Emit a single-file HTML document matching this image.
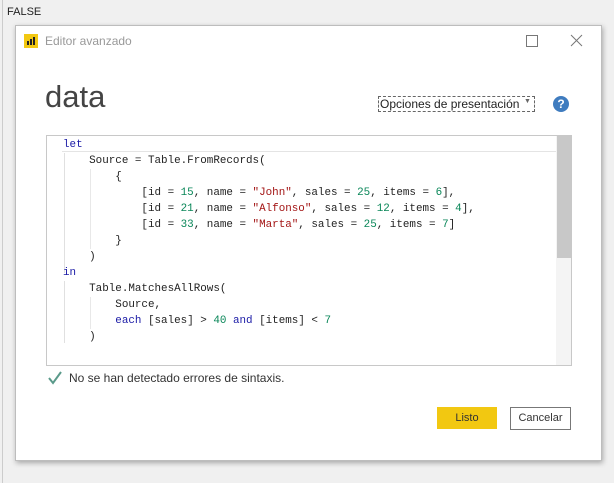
<!DOCTYPE html><html><head><style>
body{margin:0;width:614px;height:483px;background:#f0f0f0;position:relative;overflow:hidden;font-family:"Liberation Sans",sans-serif}
.a{position:absolute}
.dlg{left:15px;top:25px;width:585px;height:434px;background:#fff;border:1px solid #bdbdbd;box-shadow:1px 2px 5px rgba(0,0,0,.3)}
.code{font-family:"Liberation Mono",monospace;font-size:10.9px;color:#222;white-space:pre;line-height:16px}
.k{color:#1a1aa6}.n{color:#098658}.s{color:#a31515}
</style></head><body>
<div class="a" style="left:2px;top:0;width:1px;height:483px;background:#ccc"></div>
<div class="a" style="left:7px;top:6px;font-size:11px;color:#222">FALSE</div>
<div class="a dlg"></div>
<div class="a" style="left:24px;top:34px;width:14px;height:14px;background:#f2c811"></div>
<svg class="a" style="left:24px;top:34px" width="14" height="14"><rect x="3" y="7" width="2" height="4" fill="#222"/><rect x="6" y="5" width="2" height="6" fill="#222"/><rect x="9" y="3" width="2" height="8" fill="#222"/></svg>
<div class="a" style="left:45px;top:34px;font-size:12px;color:#999">Editor avanzado</div>
<div class="a" style="left:526px;top:35px;width:10px;height:10px;border:1px solid #777"></div>
<svg class="a" style="left:570px;top:34px" width="13" height="13"><path d="M1 1L12 12M12 1L1 12" stroke="#777" stroke-width="1"/></svg>
<div class="a" style="left:45px;top:79px;font-size:31px;color:#444;font-weight:300">data</div>
<div class="a" style="left:378px;top:96px;width:157px;height:16px;border:1px dashed #666;font-size:12px;color:#222;line-height:15px;box-sizing:border-box;padding-left:1px;white-space:nowrap">Opciones de presentación</div>
<div class="a" style="left:524px;top:98px;font-size:7px;color:#666">▼</div>
<div class="a" style="left:553px;top:96px;width:16px;height:16px;border-radius:50%;background:#3f7cbf;color:#fff;font-weight:bold;font-size:12px;text-align:center;line-height:16px">?</div>
<div class="a" style="left:46px;top:135px;width:526px;height:231px;border:1px solid #c8c8c8;box-sizing:border-box"></div>
<div class="a" style="left:556px;top:136px;width:15px;height:229px;background:#f4f4f4"></div>
<div class="a" style="left:557px;top:136px;width:14px;height:122px;background:#c8c8c8"></div>
<div class="a" style="left:62px;top:151px;width:494px;height:1px;background:#e4e4e4"></div>
<div class="a" style="left:64px;top:153px;width:1px;height:120px;background:#e0e0e0"></div>
<div class="a" style="left:64px;top:281px;width:1px;height:62px;background:#e0e0e0"></div>
<div class="a" style="left:90px;top:169px;width:1px;height:80px;background:#e8e8e8"></div>
<div class="a" style="left:90px;top:297px;width:1px;height:32px;background:#e8e8e8"></div>
<div class="a code" style="left:63px;top:137px"><span class="k">let</span>
    Source = Table.FromRecords(
        {
            [id = <span class="n">15</span>, name = <span class="s">"John"</span>, sales = <span class="n">25</span>, items = <span class="n">6</span>],
            [id = <span class="n">21</span>, name = <span class="s">"Alfonso"</span>, sales = <span class="n">12</span>, items = <span class="n">4</span>],
            [id = <span class="n">33</span>, name = <span class="s">"Marta"</span>, sales = <span class="n">25</span>, items = <span class="n">7</span>]
        }
    )
<span class="k">in</span>
    Table.MatchesAllRows(
        Source,
        <span class="k">each</span> [sales] &gt; <span class="n">40</span> <span class="k">and</span> [items] &lt; <span class="n">7</span>
    )</div>
<svg class="a" style="left:47px;top:370px" width="16" height="16"><path d="M2 8L6 13L14 2" stroke="#5a9a8a" stroke-width="2" fill="none"/></svg>
<div class="a" style="left:69px;top:371px;font-size:12px;color:#333">No se han detectado errores de sintaxis.</div>
<div class="a" style="left:437px;top:407px;width:60px;height:22px;background:#f2c811;font-size:11px;color:#333;text-align:center;line-height:22px">Listo</div>
<div class="a" style="left:510px;top:407px;width:59px;height:21px;border:1px solid #777;background:#fff;font-size:11px;color:#333;text-align:center;line-height:21px">Cancelar</div>
</body></html>
